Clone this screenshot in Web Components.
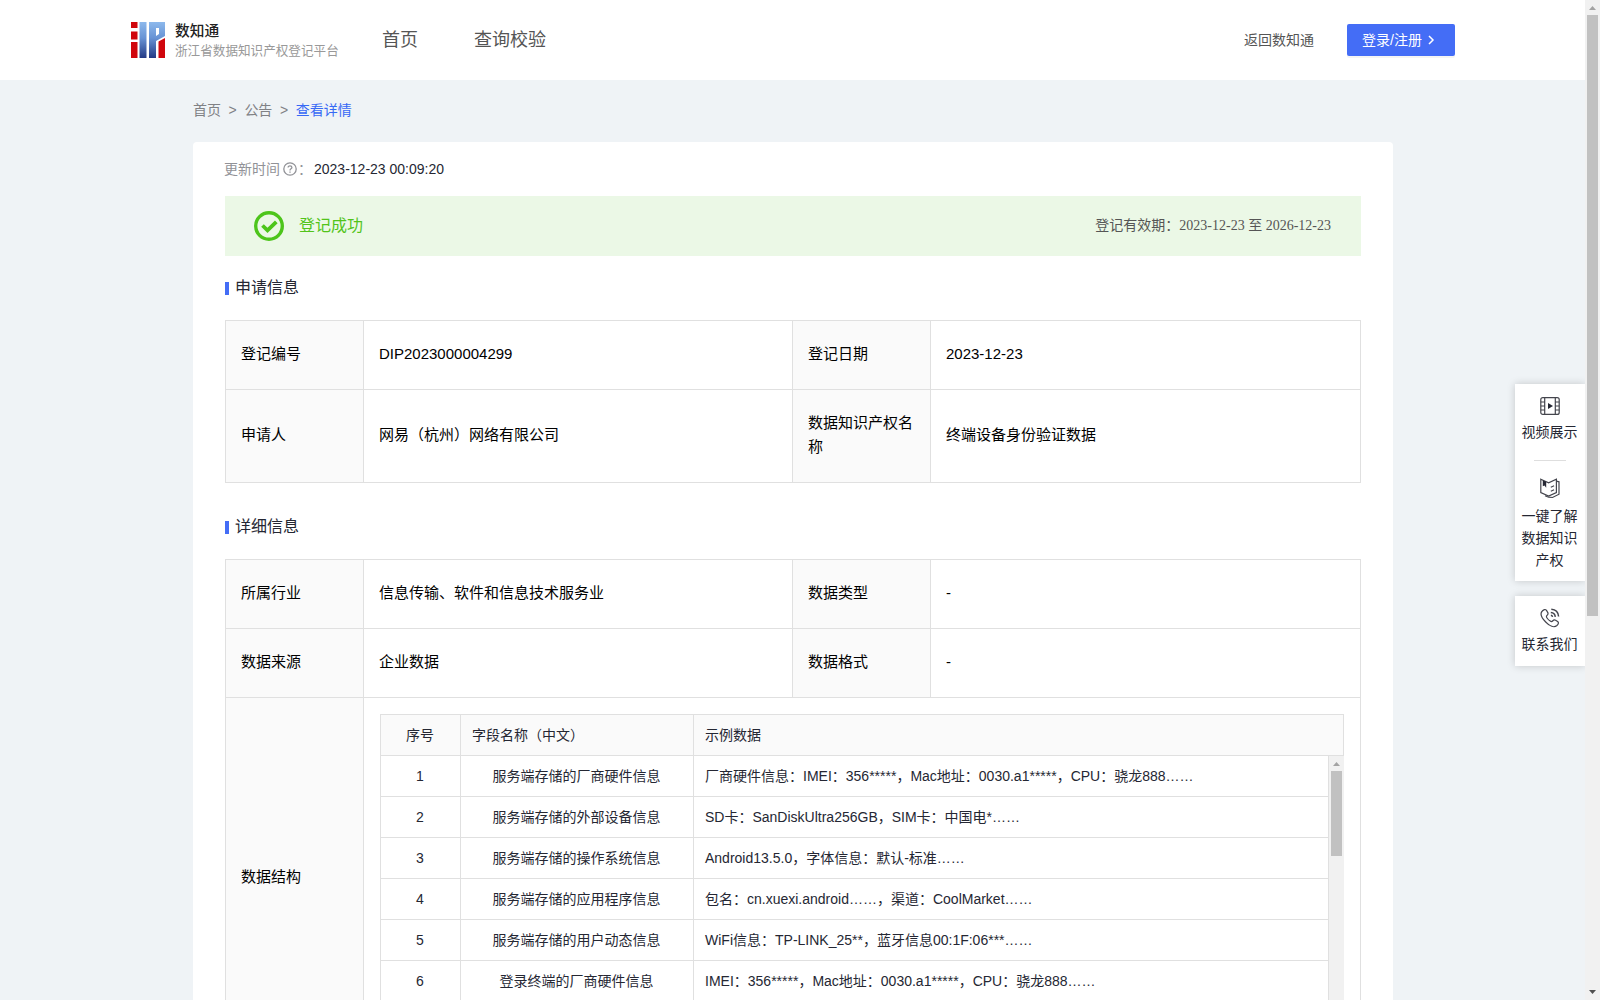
<!DOCTYPE html>
<html lang="zh-CN">
<head>
<meta charset="utf-8">
<title>数知通</title>
<style>
    html, body {
        margin: 0;
        height: 100%;
        overflow: hidden;
    }

    body {
        font-family: "Liberation Sans", "Noto Sans CJK SC", sans-serif;
        font-size: 14px;
        line-height: 22px;
        color: #252733;
        background: #eff3f6;
    }
</style>
</head>
<body>
<dip-page>
    <dip-header slot="header"></dip-header>
    <dip-breadcrumb></dip-breadcrumb>
    <dip-card>
        <dip-updated>2023-12-23 00:09:20</dip-updated>
        <dip-status from="2023-12-23" to="2026-12-23">登记成功</dip-status>
        <dip-section heading="申请信息">
            <dip-row>
                <dip-cell label>登记编号</dip-cell>
                <dip-cell>DIP2023000004299</dip-cell>
                <dip-cell label>登记日期</dip-cell>
                <dip-cell>2023-12-23</dip-cell>
            </dip-row>
            <dip-row>
                <dip-cell label>申请人</dip-cell>
                <dip-cell>网易（杭州）网络有限公司</dip-cell>
                <dip-cell label>数据知识产权名称</dip-cell>
                <dip-cell>终端设备身份验证数据</dip-cell>
            </dip-row>
        </dip-section>
        <dip-section heading="详细信息">
            <dip-row>
                <dip-cell label>所属行业</dip-cell>
                <dip-cell>信息传输、软件和信息技术服务业</dip-cell>
                <dip-cell label>数据类型</dip-cell>
                <dip-cell>-</dip-cell>
            </dip-row>
            <dip-row>
                <dip-cell label>数据来源</dip-cell>
                <dip-cell>企业数据</dip-cell>
                <dip-cell label>数据格式</dip-cell>
                <dip-cell>-</dip-cell>
            </dip-row>
            <dip-row tall>
                <dip-cell label>数据结构</dip-cell>
                <dip-cell wide><dip-fields></dip-fields></dip-cell>
            </dip-row>
        </dip-section>
    </dip-card>
    <dip-sidebar slot="side"></dip-sidebar>
    <dip-scrollbar slot="scroll" style="--thumb: 601px"></dip-scrollbar>
</dip-page>

<script>
'use strict';

class DipElement extends HTMLElement {

    constructor() {
        super();
        this._root = this.attachShadow({ mode: 'open' });
    }

    connectedCallback() {
        this._root.innerHTML = `<style>${ this._css() }</style>${ this._html() }`;
    }

    _css() {
        return '';
    }

    _html() {
        return '<slot></slot>';
    }
}

class Page extends DipElement {

    _css() {
        return `
            :host {
                display: flex;
                position: relative;
                height: 1000px;
                overflow: hidden;
            }

            .main {
                flex: 1;
                min-width: 0;
            }

            .content {
                width: 1200px;
                margin-left: 193px;
            }
        `;
    }

    _html() {
        return `
            <div class="main">
                <slot name="header"></slot>
                <div class="content"><slot></slot></div>
            </div>
            <slot name="side"></slot>
            <slot name="scroll"></slot>`;
    }
}

class Header extends DipElement {

    _css() {
        return `
            :host {
                display: flex;
                align-items: center;
                box-sizing: border-box;
                height: 80px;
                padding: 0 130px 0 131px;
                background: #fff;
                color: #555;
            }

            .logo {
                width: 34px;
                height: 36px;
                margin-right: 10px;
            }

            .name {
                font: 500 14.7px/20px "Noto Sans CJK SC", sans-serif;
                color: #222;
            }

            .sub {
                font: 12.6px/19px "Noto Sans CJK SC", sans-serif;
                color: #999;
            }

            .brand {
                width: 207px;
                padding-bottom: 2px;
            }

            nav {
                display: flex;
                gap: 56px;
                flex: 1;
                font-size: 18px;
                line-height: 26px;
            }

            .back {
                margin-right: 33px;
                padding-bottom: 1px;
            }

            button {
                display: flex;
                align-items: center;
                width: 108px;
                height: 32px;
                padding: 0 0 1px 15px;
                box-sizing: border-box;
                border: 0;
                border-radius: 2px;
                background: #446df6;
                box-shadow: 0 2px 0 rgba(0, 0, 0, .045);
                color: #fff;
                font: inherit;
                white-space: nowrap;
            }

            button svg {
                margin-left: 5px;
            }
        `;
    }

    _html() {
        return `
            <svg class="logo" viewBox="0 0 34 36">
                <defs>
                    <linearGradient id="blue" x1="0" y1="0" x2="0" y2="1">
                        <stop offset="0" stop-color="#8db9ec"></stop>
                        <stop offset=".45" stop-color="#6792d4"></stop>
                        <stop offset="1" stop-color="#233a85"></stop>
                    </linearGradient>
                </defs>
                <path fill="#d0060d" d="M0 0h6.500v6H0zM0 9.500h6.500v8H0zM0 20h6.500v16H0zM27.500 19.500L34 16v20h-6.500z"></path>
                <path fill="url(#blue)" d="M8.500 0h7v36h-7zM18 0h16v14l-9 5v17h-7z"></path>
                <path fill="#fff" d="M25 6h3v6l-3 2z"></path>
            </svg>
            <div class="brand">
                <div class="name">数知通</div>
                <div class="sub">浙江省数据知识产权登记平台</div>
            </div>
            <nav><span>首页</span><span>查询校验</span></nav>
            <span class="back">返回数知通</span>
            <button>登录/注册<svg width="8" height="10" viewBox="0 0 8 10" fill="none" stroke="#fff" stroke-width="1.500"><path d="M2 1l4 4-4 4"></path></svg></button>`;
    }
}

class Breadcrumb extends DipElement {

    _css() {
        return `
            :host {
                display: flex;
                align-items: center;
                gap: 7.6px;
                box-sizing: border-box;
                height: 62px;
                padding-bottom: 2px;
                color: #808185;
            }

            .current {
                color: #3769f5;
            }
        `;
    }

    _html() {
        return `
            <span>首页</span><span>&gt;</span><span>公告</span><span>&gt;</span><span class="current">查看详情</span>`;
    }
}

class Card extends DipElement {

    _css() {
        return `
            :host {
                display: block;
                padding: 16px 32px 32px;
                background: #fff;
                border-radius: 4px;
            }
        `;
    }
}

class Updated extends DipElement {

    _css() {
        return `
            :host {
                display: flex;
                align-items: center;
                height: 22px;
                margin-bottom: 16px;
            }

            .label {
                color: #919297;
                margin-left: -1px;
            }

            .icon {
                margin: 0 2px 0 3px;
            }

            .colon {
                width: 16px;
            }
        `;
    }

    _html() {
        return `
            <span class="label">更新时间</span>
            <svg class="icon" width="14" height="14" viewBox="0 0 14 14" fill="none" stroke="#919297" stroke-width="1.300">
                <circle cx="7" cy="7" r="6.200"></circle>
                <path d="M5.100 5.600c0-2.500 3.800-2.300 3.800-.1C8.900 6.900 7 6.800 7 8.400M7 9.500v1.200"></path>
            </svg>
            <span class="label colon">：</span>
            <span><slot></slot></span>`;
    }
}

class Status extends DipElement {

    _css() {
        return `
            :host {
                display: flex;
                align-items: center;
                justify-content: space-between;
                height: 60px;
                padding: 0 30px 0 29px;
                background: #ebf8e6;
            }

            .state {
                display: flex;
                align-items: center;
                gap: 15px;
                font-size: 16px;
                color: #52c41a;
            }

            .period {
                color: #555;
                font-family: "Liberation Serif", "Noto Sans CJK SC", serif;
            }
        `;
    }

    _html() {
        return `
            <div class="state">
                <svg width="30" height="30" viewBox="0 0 30 30" fill="none" stroke="#4dc51b">
                    <circle cx="15" cy="15" r="13.300" stroke-width="3.400"></circle>
                    <path d="M8.500 14.500l5 4.800 8.800-8.500" stroke-width="3.800"></path>
                </svg>
                <span class="text"><slot></slot></span>
            </div>
            <div class="period">登记有效期：${ this.getAttribute('from') } 至 ${ this.getAttribute('to') }</div>`;
    }
}

class Section extends DipElement {

    _css() {
        return `
            :host {
                display: block;
                padding-top: 20px;
                margin-bottom: 12px;
            }

            .heading {
                display: flex;
                align-items: center;
                gap: 6px;
                height: 24px;
                margin-bottom: 20px;
                font-size: 16px;
            }

            .heading::before {
                content: '';
                width: 4px;
                height: 13px;
                margin-top: 1px;
                background: #446df6;
            }

            .grid {
                border: 1px solid #e0e0e0;
                border-bottom: 0;
            }
        `;
    }

    _html() {
        return `
            <div class="heading">${ this.getAttribute('heading') }</div>
            <div class="grid"><slot></slot></div>`;
    }
}

class Row extends DipElement {

    _css() {
        return `
            :host {
                display: grid;
                grid-template-columns: 138px 429px 138px 429px;
                min-height: 68px;
                border-bottom: 1px solid #e0e0e0;
            }

            :host([tall]) {
                height: 360px;
            }
        `;
    }
}

class Cell extends DipElement {

    _css() {
        return `
            :host {
                display: flex;
                align-items: center;
                box-sizing: border-box;
                padding: 21px 16px 23px 15px;
                border-right: 1px solid #e0e0e0;
                font-size: 15px;
                line-height: 24px;
                color: #000;
            }

            :host([label]) {
                background: #fafafa;
            }

            :host(:last-child) {
                border-right: 0;
            }

            :host([wide]) {
                grid-column: span 3;
                align-items: flex-start;
                padding: 16px;
            }
        `;
    }
}

class Fields extends DipElement {

    _css() {
        return `
            :host {
                display: block;
                flex: 1;
                font-size: 14px;
                line-height: 22px;
                color: #252733;
            }

            .line {
                display: grid;
                grid-template-columns: 80px 233px 1fr;
                box-sizing: border-box;
                height: 41px;
                border: solid #e0e0e0;
                border-width: 0 1px 1px;
            }

            .head {
                height: 42px;
                border-top-width: 1px;
                background: #fafafa;
            }

            .line span {
                display: flex;
                align-items: center;
                justify-content: center;
                box-sizing: border-box;
                padding: 0 12px 1px 11px;
                border-right: 1px solid #e0e0e0;
                white-space: nowrap;
            }

            .line span:last-child {
                border-right: 0;
            }

            .line span:last-child,
            .head span:nth-child(2) {
                justify-content: flex-start;
            }

            .body {
                display: flex;
                height: 286px;
                overflow: hidden;
            }

            .lines {
                flex: 1;
            }
        `;
    }

    _html() {
        let rows = [
            [ '服务端存储的厂商硬件信息', '厂商硬件信息：IMEI：356*****，Mac地址：0030.a1*****，CPU：骁龙888……' ],
            [ '服务端存储的外部设备信息', 'SD卡：SanDiskUltra256GB，SIM卡：中国电*……' ],
            [ '服务端存储的操作系统信息', 'Android13.5.0，字体信息：默认-标准……' ],
            [ '服务端存储的应用程序信息', '包名：cn.xuexi.android……，渠道：CoolMarket……' ],
            [ '服务端存储的用户动态信息', 'WiFi信息：TP-LINK_25**，蓝牙信息00:1F:06***……' ],
            [ '登录终端的厂商硬件信息', 'IMEI：356*****，Mac地址：0030.a1*****，CPU：骁龙888……' ]
        ];

        let lines = rows.map((row, i) => `
            <div class="line"><span>${ i + 1 }</span><span>${ row[0] }</span><span>${ row[1] }</span></div>`);

        return `
            <div class="line head"><span>序号</span><span>字段名称（中文）</span><span>示例数据</span></div>
            <div class="body">
                <div class="lines">${ lines.join('') }</div>
                <dip-scrollbar style="--thumb: 85px"></dip-scrollbar>
            </div>`;
    }
}

class Scrollbar extends DipElement {

    _css() {
        return `
            :host {
                display: flex;
                flex-direction: column;
                align-items: center;
                width: 15px;
                flex: none;
                background: #f1f1f1;
            }

            .thumb {
                width: 11px;
                height: var(--thumb);
                background: #c1c1c1;
            }

            .down {
                margin-top: auto;
            }
        `;
    }

    _html() {
        return `
            <svg width="15" height="15"><path d="M4 10h7L7.500 6z" fill="#a3a3a3"></path></svg>
            <div class="thumb"></div>
            <svg class="down" width="15" height="15"><path d="M4 5h7L7.500 9z" fill="#505050"></path></svg>`;
    }
}

class Sidebar extends DipElement {

    _css() {
        return `
            :host {
                display: flex;
                flex-direction: column;
                gap: 15px;
                position: absolute;
                right: 15px;
                top: 384px;
                width: 70px;
                clip-path: inset(-20px 0 -20px -20px);
            }

            .panel {
                display: flex;
                flex-direction: column;
                align-items: center;
                box-sizing: border-box;
                height: 197px;
                padding: 12px 1px 0 0;
                background: #fff;
                box-shadow: 0 0 8px rgba(0, 0, 0, .18);
                text-align: center;
            }

            .small {
                height: 70px;
            }

            .text {
                width: 56px;
                margin-top: 5px;
            }

            .text.long {
                margin-top: 6px;
            }

            hr {
                width: 32px;
                height: 1px;
                margin: 17px 0 17px;
                border: 0;
                background: #dedede;
            }

            svg {
                flex: none;
                fill: none;
                stroke: #44454d;
                stroke-width: 1.2;
            }
        `;
    }

    _html() {
        return `
            <div class="panel">
                <svg width="20" height="20" viewBox="0 0 20 20">
                    <rect x=".8" y="1.600" width="18.400" height="16.800" rx="2"></rect>
                    <path d="M4.700 1.600v16.800M15.300 1.600v16.800M.8 6h3.900M.8 10h3.900M.8 14h3.900M15.300 6h3.900M15.300 10h3.900M15.300 14h3.900"></path>
                    <path d="M8 7l5 3-5 3z" fill="#252733" stroke="none"></path>
                </svg>
                <div class="text">视频展示</div>
                <hr>
                <svg width="20" height="21" viewBox="0 0 20 21">
                    <path d="M.8 1.300L8.600 4.800 16.400 1.300v13.200L8.600 18 .8 14.500z"></path>
                    <path d="M16.400 3.200l2.600.6v12.400l-6.500 3.300-3.900-.3-3.600-1.400M10.800 9.200l3.300-1.500M10.800 13.200l3.300-1.500"></path>
                    <path d="M2.800 2.200l3.400 1.500v6L4.500 7.600 2.800 8.300z" fill="#252733" stroke="none"></path>
                </svg>
                <div class="text long">一键了解数据知识产权</div>
            </div>
            <div class="panel small">
                <svg width="20" height="20" viewBox="0 0 20 20">
                    <path d="M2.300 3C3.800 1.400 5.400.9 6.500 2.400l1.300 2.200c.8 1.500-.2 2.200-1 3-.7.800-.4 1.500.2 2.400.9 1.300 1.900 2.300 3.200 3.100 1 .6 1.700.7 2.400-.1.800-.9 1.700-1.500 3-.8l2 1.300c1.400 1 .8 2.600-.7 4C14.200 19.800 9.700 18.200 5.700 14 1.600 9.800-.5 5.800 2.300 3z"></path>
                    <path d="M10.800 4.400c2.500.2 4.300 2 4.500 4.500M11.300 1.200c4.200.3 7 3.200 7.300 7.300M10.900 7.200c1 .2 1.500.7 1.700 1.700" stroke-width="1.500"></path>
                </svg>
                <div class="text">联系我们</div>
            </div>`;
    }
}

customElements.define('dip-page', Page);
customElements.define('dip-header', Header);
customElements.define('dip-breadcrumb', Breadcrumb);
customElements.define('dip-card', Card);
customElements.define('dip-updated', Updated);
customElements.define('dip-status', Status);
customElements.define('dip-section', Section);
customElements.define('dip-row', Row);
customElements.define('dip-cell', Cell);
customElements.define('dip-fields', Fields);
customElements.define('dip-scrollbar', Scrollbar);
customElements.define('dip-sidebar', Sidebar);
</script>
</body>
</html>
